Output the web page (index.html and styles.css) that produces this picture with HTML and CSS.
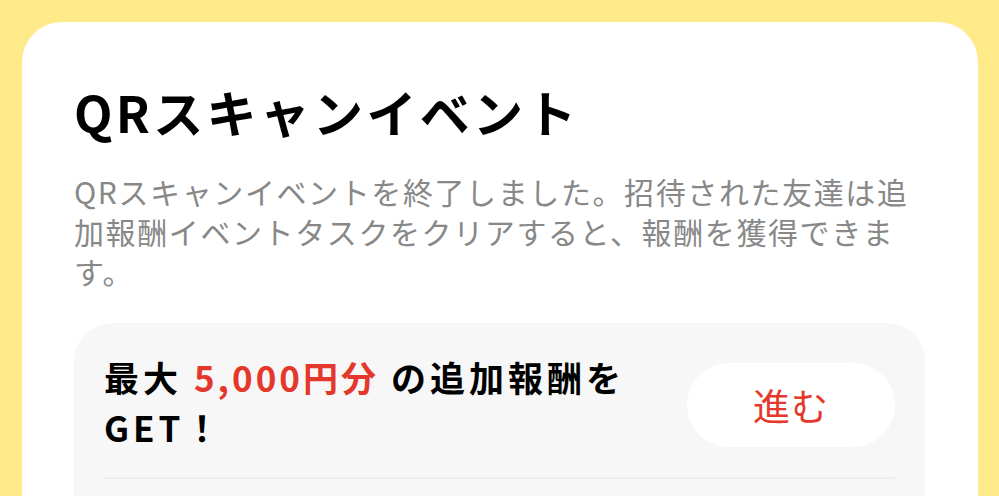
FILE: index.html
```html
<!DOCTYPE html>
<html lang="ja">
<head>
    <meta charset="UTF-8">
    <meta name="viewport" content="width=device-width, initial-scale=1.0">
    <title>QRスキャンイベント</title>
    <link rel="stylesheet" href="styles.css">
</head>
<body>
    <div class="sheet">
        <h1 class="event-title">QRスキャンイベント</h1>
        <p class="event-desc">QRスキャンイベントを終了しました。招待された友達は追加報酬イベントタスクをクリアすると、報酬を獲得できます。</p>
        <div class="reward-box">
            <div class="reward-row">
                <p class="reward-text">最大 <span class="accent">5,000円分</span> の追加報酬をGET！</p>
                <button class="go-btn" type="button">進む</button>
            </div>
            <div class="divider"></div>
        </div>
    </div>
</body>
</html>
```

FILE: styles.css
```css
body {
    margin: 0;
    padding: 22px 21px 0 22px;
    background-color: #ffea8a;
    font-family: "Noto Sans CJK JP", "Noto Sans", sans-serif;
    color: #000;
    height: 474px;
    overflow: hidden;
}
.sheet {
    background: #fff;
    border-radius: 40px 40px 0 0;
    padding: 58px 53px 0 52px;
    min-height: 500px;
}
.event-title {
    margin: 0;
    font-size: 50px;
    line-height: 62px;
    font-weight: 700;
    letter-spacing: 3.3px;
}
.event-desc {
    margin: 29px 0 0;
    font-size: 30px;
    line-height: 40px;
    letter-spacing: 1.6px;
    color: #888;
}
.reward-box {
    margin-top: 32px;
    background: #f7f7f7;
    border-radius: 38px 38px 0 0;
    padding: 29px 30px 40px;
}
.reward-row {
    display: flex;
    align-items: center;
    gap: 20px;
}
.reward-text {
    flex: 1;
    margin: 0;
    font-size: 35px;
    line-height: 50px;
    font-weight: 700;
    letter-spacing: 4px;
}
.accent {
    color: #e5382d;
    letter-spacing: 3px;
}
.go-btn {
    width: 208px;
    height: 84px;
    margin-top: 6px;
    border: none;
    border-radius: 42px;
    background: #fff;
    color: #e5382d;
    font-family: inherit;
    font-size: 37px;
    letter-spacing: 1px;
    cursor: pointer;
}
.divider {
    margin-top: 25px;
    height: 2px;
    background: #ececec;
}
```
